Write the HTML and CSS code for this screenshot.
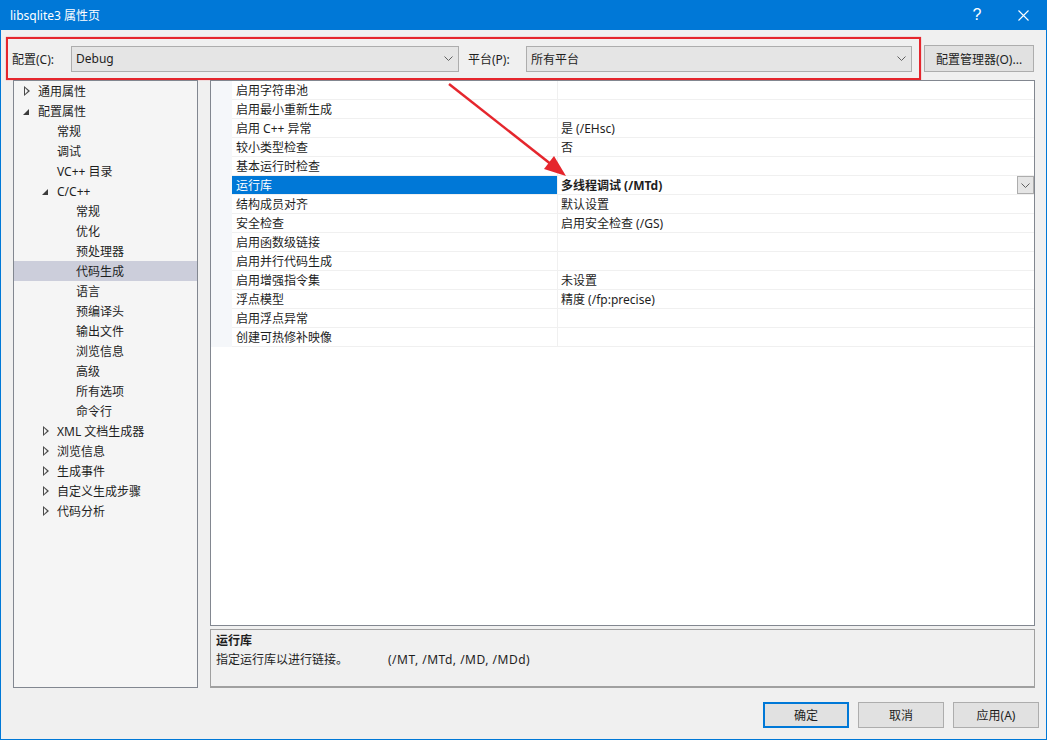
FILE: index.html
```html
<!DOCTYPE html>
<html lang="zh-CN">

<head>
    <meta charset="UTF-8">
    <meta name="viewport" content="width=device-width, initial-scale=1.0">
    <title>libsqlite3 属性页</title>
    <link rel="stylesheet" href="styles.css">
</head>

<body>
    <div class="window">
        <!-- 标题栏 -->
        <div class="title-bar">
            <span class="title-text">libsqlite3 属性页</span>
            <span class="title-button title-help">?</span>
            <span class="title-button">
                <svg width="11" height="11" viewBox="0 0 11 11"><path d="M0.5 0.5L10.5 10.5M10.5 0.5L0.5 10.5" stroke="#fff" stroke-width="1.1"/></svg>
            </span>
        </div>

        <!-- 配置 / 平台 -->
        <div class="config-bar">
            <div class="config-box">
                <span class="config-label">配置(C):</span>
                <div class="combo combo-config">
                    <span>Debug</span>
                    <svg class="chevron" width="9" height="5" viewBox="0 0 9 5"><path d="M0.5 0.5L4.5 4.5L8.5 0.5" fill="none" stroke="#606060"/></svg>
                </div>
                <span class="config-label platform-label">平台(P):</span>
                <div class="combo combo-platform">
                    <span>所有平台</span>
                    <svg class="chevron" width="9" height="5" viewBox="0 0 9 5"><path d="M0.5 0.5L4.5 4.5L8.5 0.5" fill="none" stroke="#606060"/></svg>
                </div>
            </div>
            <button class="button manager-button">配置管理器(O)...</button>
        </div>

        <div class="main">
            <!-- 左侧树 -->
            <ul class="tree">
                <li class="tree-item level-0"><span class="arrow collapsed"></span>通用属性</li>
                <li class="tree-item level-0"><span class="arrow expanded"></span>配置属性</li>
                <li class="tree-item level-1"><span class="arrow"></span>常规</li>
                <li class="tree-item level-1"><span class="arrow"></span>调试</li>
                <li class="tree-item level-1"><span class="arrow"></span>VC++ 目录</li>
                <li class="tree-item level-1"><span class="arrow expanded"></span>C/C++</li>
                <li class="tree-item level-2"><span class="arrow"></span>常规</li>
                <li class="tree-item level-2"><span class="arrow"></span>优化</li>
                <li class="tree-item level-2"><span class="arrow"></span>预处理器</li>
                <li class="tree-item level-2 selected"><span class="arrow"></span>代码生成</li>
                <li class="tree-item level-2"><span class="arrow"></span>语言</li>
                <li class="tree-item level-2"><span class="arrow"></span>预编译头</li>
                <li class="tree-item level-2"><span class="arrow"></span>输出文件</li>
                <li class="tree-item level-2"><span class="arrow"></span>浏览信息</li>
                <li class="tree-item level-2"><span class="arrow"></span>高级</li>
                <li class="tree-item level-2"><span class="arrow"></span>所有选项</li>
                <li class="tree-item level-2"><span class="arrow"></span>命令行</li>
                <li class="tree-item level-1"><span class="arrow collapsed"></span>XML 文档生成器</li>
                <li class="tree-item level-1"><span class="arrow collapsed"></span>浏览信息</li>
                <li class="tree-item level-1"><span class="arrow collapsed"></span>生成事件</li>
                <li class="tree-item level-1"><span class="arrow collapsed"></span>自定义生成步骤</li>
                <li class="tree-item level-1"><span class="arrow collapsed"></span>代码分析</li>
            </ul>

            <div class="right-pane">
                <!-- 属性表 -->
                <div class="grid">
                    <div class="grid-row"><span class="gutter"></span><span class="name">启用字符串池</span><span class="value"></span></div>
                    <div class="grid-row"><span class="gutter"></span><span class="name">启用最小重新生成</span><span class="value"></span></div>
                    <div class="grid-row"><span class="gutter"></span><span class="name">启用 C++ 异常</span><span class="value">是 (/EHsc)</span></div>
                    <div class="grid-row"><span class="gutter"></span><span class="name">较小类型检查</span><span class="value">否</span></div>
                    <div class="grid-row"><span class="gutter"></span><span class="name">基本运行时检查</span><span class="value"></span></div>
                    <div class="grid-row selected">
                        <span class="gutter"></span><span class="name">运行库</span>
                        <span class="value">
                            <b>多线程调试 (/MTd)</b>
                            <span class="drop-button">
                                <svg width="9" height="5" viewBox="0 0 9 5"><path d="M0.5 0.5L4.5 4.5L8.5 0.5" fill="none" stroke="#606060"/></svg>
                            </span>
                        </span>
                    </div>
                    <div class="grid-row"><span class="gutter"></span><span class="name">结构成员对齐</span><span class="value">默认设置</span></div>
                    <div class="grid-row"><span class="gutter"></span><span class="name">安全检查</span><span class="value">启用安全检查 (/GS)</span></div>
                    <div class="grid-row"><span class="gutter"></span><span class="name">启用函数级链接</span><span class="value"></span></div>
                    <div class="grid-row"><span class="gutter"></span><span class="name">启用并行代码生成</span><span class="value"></span></div>
                    <div class="grid-row"><span class="gutter"></span><span class="name">启用增强指令集</span><span class="value">未设置</span></div>
                    <div class="grid-row"><span class="gutter"></span><span class="name">浮点模型</span><span class="value">精度 (/fp:precise)</span></div>
                    <div class="grid-row"><span class="gutter"></span><span class="name">启用浮点异常</span><span class="value"></span></div>
                    <div class="grid-row"><span class="gutter"></span><span class="name">创建可热修补映像</span><span class="value"></span></div>
                </div>

                <!-- 说明 -->
                <div class="description">
                    <div class="description-title">运行库</div>
                    <div class="description-text"><span class="description-main">指定运行库以进行链接。</span><span class="switches">(/MT, /MTd, /MD, /MDd)</span></div>
                </div>
            </div>
        </div>

        <div class="footer">
            <button class="button footer-button default">确定</button>
            <button class="button footer-button">取消</button>
            <button class="button footer-button">应用(A)</button>
        </div>

        <!-- 红色标注箭头 -->
        <svg class="annotation" width="1047" height="740" viewBox="0 0 1047 740">
            <line x1="449" y1="84" x2="552" y2="165" stroke="#e5262d" stroke-width="2.5"/>
            <polygon points="566,176 544,169 554,156" fill="#e5262d"/>
        </svg>
    </div>
</body>

</html>
```

FILE: styles.css
```css
:root {
    --accent: #0078d7;
    --window-bg: #f0f0f0;
    --border: #828790;
    --control-bg: #e5e5e5;
    --control-border: #adadad;
    --text: #1e1e1e;
    --annotation: #e5262d;
    --grid-line: #f0f0f0;
}

body {
    margin: 0;
    padding: 0;
    font-family: "Noto Sans", "Noto Sans CJK SC", sans-serif;
    font-size: 12px;
    color: var(--text);
    background: #ffffff;
}

.window {
    position: relative;
    width: 1047px;
    height: 740px;
    box-sizing: border-box;
    border: 1px solid var(--accent);
    border-top: none;
    background: var(--window-bg);
    display: flex;
    flex-direction: column;
}

.title-bar {
    height: 30px;
    background: var(--accent);
    color: #ffffff;
    display: flex;
    align-items: center;
    padding-left: 9px;
}

.title-text {
    flex: 1;
    font-size: 12px;
}

.title-button {
    width: 46px;
    height: 30px;
    display: flex;
    align-items: center;
    justify-content: center;
}

.title-help {
    font-size: 16px;
    font-family: "Liberation Sans", sans-serif;
    padding-bottom: 1px;
    box-sizing: border-box;
}

/* 配置行 */
.config-bar {
    display: flex;
    align-items: center;
    padding: 7px 0 0 5px;
}

.config-box {
    display: flex;
    align-items: center;
    height: 43px;
    box-sizing: border-box;
    border: 2px solid var(--annotation);
    box-shadow: 0 0 1px rgba(229, 38, 45, 0.6);
    padding: 0 7px 0 4px;
}

.config-label {
    width: 59px;
}

.platform-label {
    margin-left: 9px;
    width: 58px;
}

.combo {
    height: 26px;
    box-sizing: border-box;
    background: var(--control-bg);
    border: 1px solid var(--control-border);
    display: flex;
    align-items: center;
    justify-content: space-between;
    padding: 0 5px 0 4px;
}

.combo-config {
    width: 388px;
}

.combo-platform {
    width: 386px;
}

.button {
    font-family: inherit;
    font-size: 12px;
    color: var(--text);
    background: #e1e1e1;
    border: 1px solid var(--control-border);
    padding: 0;
    box-sizing: border-box;
}

.manager-button {
    margin-left: 3px;
    width: 110px;
    height: 27px;
}

/* 主体 */
.main {
    display: flex;
    padding-left: 12px;
    height: 608px;
}

.tree {
    list-style: none;
    margin: 0;
    padding: 0;
    width: 185px;
    box-sizing: border-box;
    border: 1px solid var(--border);
    background: #f5f5f5;
}

.tree-item {
    height: 20px;
    box-sizing: border-box;
    padding-top: 1px;
    line-height: 19px;
    display: flex;
    align-items: center;
    white-space: nowrap;
}

.tree-item.selected {
    background: #cccedb;
}

.level-0 { padding-left: 8px; }
.level-1 { padding-left: 27px; }
.level-2 { padding-left: 46px; }

.arrow {
    width: 16px;
    height: 19px;
    position: relative;
    flex-shrink: 0;
}

/* 折叠：空心三角 */
.arrow.collapsed::before {
    content: "";
    position: absolute;
    left: 2px;
    top: 4px;
    width: 0;
    height: 0;
    border-top: 5px solid transparent;
    border-bottom: 5px solid transparent;
    border-left: 6px solid #4a4a4a;
}

.arrow.collapsed::after {
    content: "";
    position: absolute;
    left: 3px;
    top: 6px;
    width: 0;
    height: 0;
    border-top: 3px solid transparent;
    border-bottom: 3px solid transparent;
    border-left: 3.6px solid #f5f5f5;
}

/* 展开：实心三角 */
.arrow.expanded::before {
    content: "";
    position: absolute;
    left: 1px;
    top: 7px;
    width: 0;
    height: 0;
    border-left: 6px solid transparent;
    border-bottom: 6px solid #3c3c3c;
}

.right-pane {
    margin-left: 12px;
    width: 825px;
    display: flex;
    flex-direction: column;
}

.grid {
    height: 546px;
    box-sizing: border-box;
    border: 1px solid var(--border);
    background: #ffffff;
}

.grid-row {
    display: flex;
    height: 19px;
}

.gutter {
    width: 21px;
    background: #f5f7fa;
    flex-shrink: 0;
}

.name,
.value {
    box-sizing: border-box;
    padding-top: 1px;
    line-height: 18px;
    border-bottom: 1px solid var(--grid-line);
    overflow: hidden;
}

.name {
    width: 325px;
    padding-left: 4px;
}

.value {
    flex: 1;
    padding-left: 3px;
    border-left: 1px solid var(--grid-line);
    display: flex;
    justify-content: space-between;
}

.grid-row.selected .name {
    background: var(--accent);
    color: #ffffff;
}

.grid-row.selected .value {
    padding-top: 0;
    align-items: center;
}

.value b {
    font-weight: bold;
    padding-top: 1px;
}

.drop-button {
    width: 17px;
    height: 18px;
    box-sizing: border-box;
    background: var(--control-bg);
    border: 1px solid var(--control-border);
    display: flex;
    align-items: center;
    justify-content: center;
}

.description {
    margin-top: 3px;
    height: 59px;
    box-sizing: border-box;
    border: 1px solid #a0a0a0;
    border-bottom-width: 2px;
    padding: 1px 0 0 5px;
    line-height: 19px;
}

.description-title {
    font-weight: bold;
}

.description-main {
    display: inline-block;
    width: 172px;
}

.switches {
    letter-spacing: 0.5px;
}

/* 底部按钮 */
.footer {
    display: flex;
    justify-content: flex-end;
    gap: 9px;
    padding: 14px 7px 0 0;
}

.footer-button {
    width: 86px;
    height: 26px;
}

.footer-button.default {
    border: 2px solid var(--accent);
}

.annotation {
    position: absolute;
    left: -1px;
    top: 0;
    pointer-events: none;
}
```
